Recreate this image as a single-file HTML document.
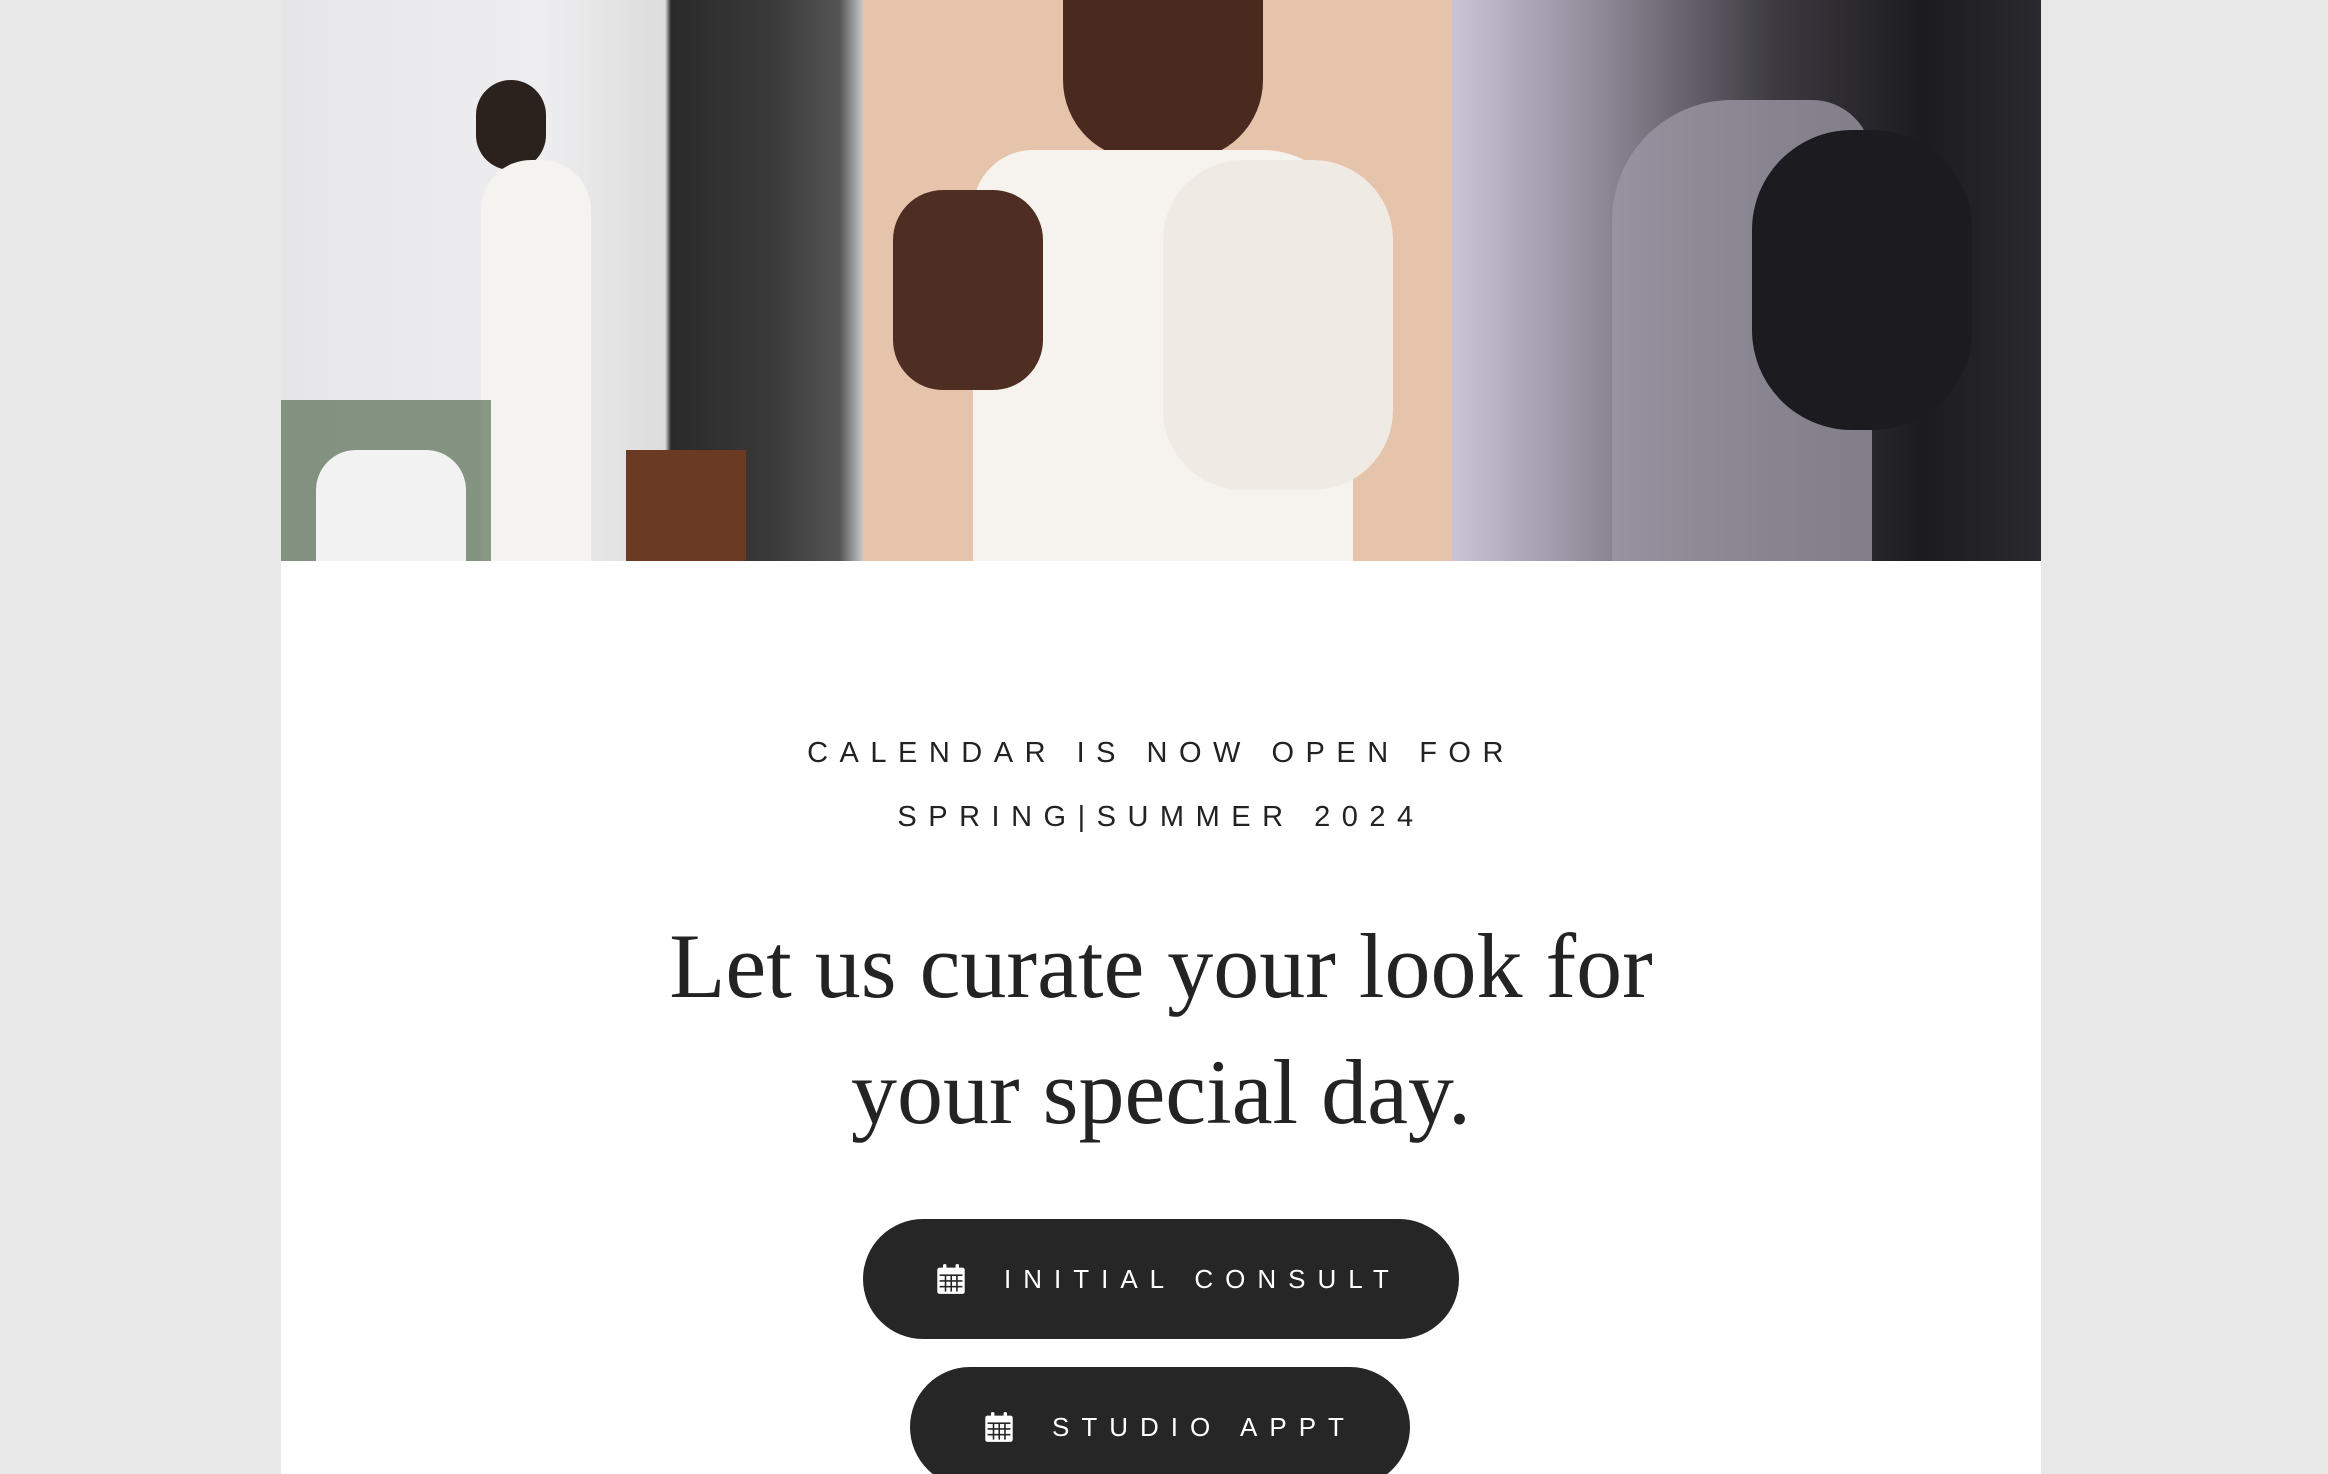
<!DOCTYPE html>
<html><head><meta charset="utf-8"><style>
html,body{margin:0;padding:0;overflow:hidden;width:2328px;height:1474px}
body{background:#e8e8e8;font-family:"Liberation Sans",sans-serif}
.wrap{position:relative;width:2328px;height:1474px;overflow:hidden}
.panel{position:absolute;left:281px;top:0;width:1760px;height:1474px;background:#fff}
.img{position:absolute;top:0;height:561px;overflow:hidden}
.i1{left:281px;width:582px;background:linear-gradient(90deg,#e6e6e8 0%,#eeeef0 45%,#dcdcdc 66%,#2a2a2a 67%,#3a3a3a 85%,#555 96%,#c9c9c9 100%)}
.i2{left:863px;width:589px;background:#e6c3ab}
.i3{left:1452px;width:589px;background:linear-gradient(90deg,#c9c5d6 0%,#8e8a98 25%,#3c3a40 55%,#1c1b1f 80%,#2a2a2e 100%)}
.t1{position:absolute;left:281px;width:1760px;text-align:center;font-size:29px;letter-spacing:11.5px;color:#222}
h1{position:absolute;left:281px;width:1760px;top:903px;margin:0;text-align:center;font-family:"Liberation Serif",serif;font-weight:400;font-size:92px;line-height:126px;color:#232323}
.btn{position:absolute;height:120px;border-radius:60px;background:#262626;color:#fff;font-size:26px;letter-spacing:12px;display:flex;align-items:center;box-sizing:border-box}
.btn svg{margin-right:38px}
</style></head><body><div class="wrap">
<div class="panel"></div>
<div class="img i1">
  <div style="position:absolute;left:195px;top:80px;width:70px;height:90px;border-radius:40px;background:#2b211d"></div>
  <div style="position:absolute;left:200px;top:160px;width:110px;height:420px;border-radius:50px 50px 10px 10px;background:#f4f3f0"></div>
  <div style="position:absolute;left:0;top:400px;width:210px;height:161px;background:#2f4a2a;opacity:.55"></div>
  <div style="position:absolute;left:35px;top:450px;width:150px;height:111px;border-radius:40px 40px 0 0;background:#f2f2f2"></div>
  <div style="position:absolute;left:345px;top:450px;width:120px;height:111px;background:#6b3a22"></div>
</div>
<div class="img i2">
  <div style="position:absolute;left:200px;top:0;width:200px;height:160px;background:#4a2a1e;border-radius:0 0 80px 80px"></div>
  <div style="position:absolute;left:110px;top:150px;width:380px;height:420px;background:#f6f3ee;border-radius:60px 90px 0 0"></div>
  <div style="position:absolute;left:300px;top:160px;width:230px;height:330px;background:#efebe4;border-radius:80px"></div>
  <div style="position:absolute;left:30px;top:190px;width:150px;height:200px;background:#4e2e22;border-radius:50px"></div>
</div>
<div class="img i3">
  <div style="position:absolute;left:160px;top:100px;width:260px;height:461px;background:#9a96a2;border-radius:120px 60px 0 0;opacity:.8"></div>
  <div style="position:absolute;left:300px;top:130px;width:220px;height:300px;background:#1c1b20;border-radius:100px"></div>
</div>

<div class="t1" style="top:737px">CALENDAR IS NOW OPEN FOR</div>
<div class="t1" style="top:801px">SPRING|SUMMER 2024</div>
<h1>Let us curate your look for<br>your special day.</h1>

<div class="btn" style="left:863px;top:1219px;width:596px;padding-left:73px">
<svg width="30" height="32" viewBox="0 0 26 28"><rect x="1" y="4" width="24" height="23" rx="2" fill="#fff"/><rect x="6" y="1" width="3" height="6" rx="1" fill="#fff"/><rect x="17" y="1" width="3" height="6" rx="1" fill="#fff"/><g fill="#262626"><rect x="3" y="10" width="20" height="1.4"/><rect x="3" y="15" width="20" height="1.4"/><rect x="3" y="20" width="20" height="1.4"/><rect x="7.5" y="10" width="1.4" height="15"/><rect x="12.5" y="10" width="1.4" height="15"/><rect x="17.5" y="10" width="1.4" height="15"/></g></svg>INITIAL CONSULT</div>
<div class="btn" style="left:910px;top:1367px;width:500px;height:120px;padding-left:74px">
<svg width="30" height="32" viewBox="0 0 26 28"><rect x="1" y="4" width="24" height="23" rx="2" fill="#fff"/><rect x="6" y="1" width="3" height="6" rx="1" fill="#fff"/><rect x="17" y="1" width="3" height="6" rx="1" fill="#fff"/><g fill="#262626"><rect x="3" y="10" width="20" height="1.4"/><rect x="3" y="15" width="20" height="1.4"/><rect x="3" y="20" width="20" height="1.4"/><rect x="7.5" y="10" width="1.4" height="15"/><rect x="12.5" y="10" width="1.4" height="15"/><rect x="17.5" y="10" width="1.4" height="15"/></g></svg>STUDIO APPT</div>
</div></body></html>
